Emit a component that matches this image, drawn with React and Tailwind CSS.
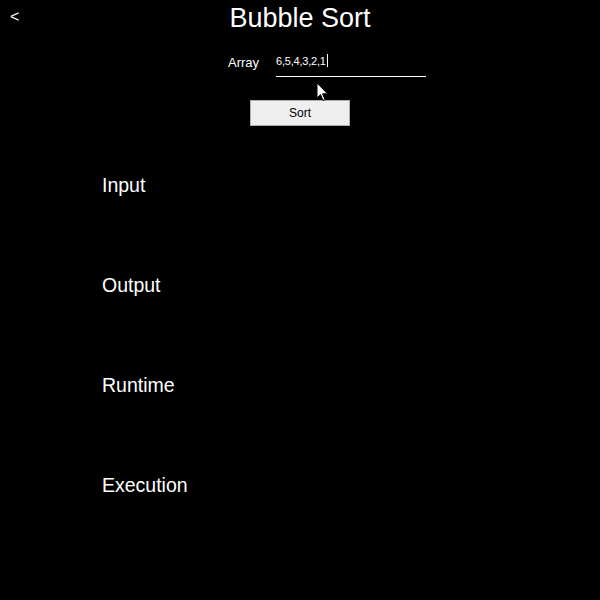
import React from 'react';

const Cursor = () => (
  <svg className="absolute left-[316px] top-[82px]" width="13" height="20" viewBox="0 0 13 20">
    <path d="M1 1 L1 16 L4.5 12.5 L7 18.5 L9 17.5 L6.6 11.8 L11.5 11.8 Z" fill="#fff" stroke="#000" strokeWidth="1" strokeLinejoin="round" />
  </svg>
);

const App = () => {
  const labels = ['Input', 'Output', 'Runtime', 'Execution'];
  return (
    <div className="relative w-[600px] h-[600px] bg-black text-white overflow-hidden" style={{ fontFamily: '"Liberation Sans", Arial, sans-serif' }}>
      <div className="grid grid-cols-[1fr_auto_1fr] pt-[5px]">
        <button className="justify-self-start pl-[10px] mt-[4px] text-[16px] leading-none text-white h-fit">&lt;</button>
        <h1 className="text-[27px] leading-none font-normal">Bubble Sort</h1>
        <div />
      </div>

      <div className="flex items-start ml-[228px] mt-[23px]">
        <span className="text-[13px] leading-none w-[48px] pt-[1px]">Array</span>
        <div className="w-[150px] h-[22px] border-b border-white flex items-start">
          <span className="text-[11px] leading-none tracking-[-0.2px] pt-[1px]">6,5,4,3,2,1</span>
          <span className="w-px h-[13px] bg-white -mt-[1px] ml-[1px]" />
        </div>
      </div>

      <button className="block mx-auto mt-[23px] w-[100px] h-[26px] bg-[#efefef] border border-[#adadad] text-black text-[12px] leading-none">
        Sort
      </button>

      <div className="flex flex-col gap-[80.5px] mt-[50px] pl-[102px]">
        {labels.map((l) => (
          <div key={l} className="text-[19.5px] leading-none">{l}</div>
        ))}
      </div>

      <Cursor />
    </div>
  );
};

export default App;
